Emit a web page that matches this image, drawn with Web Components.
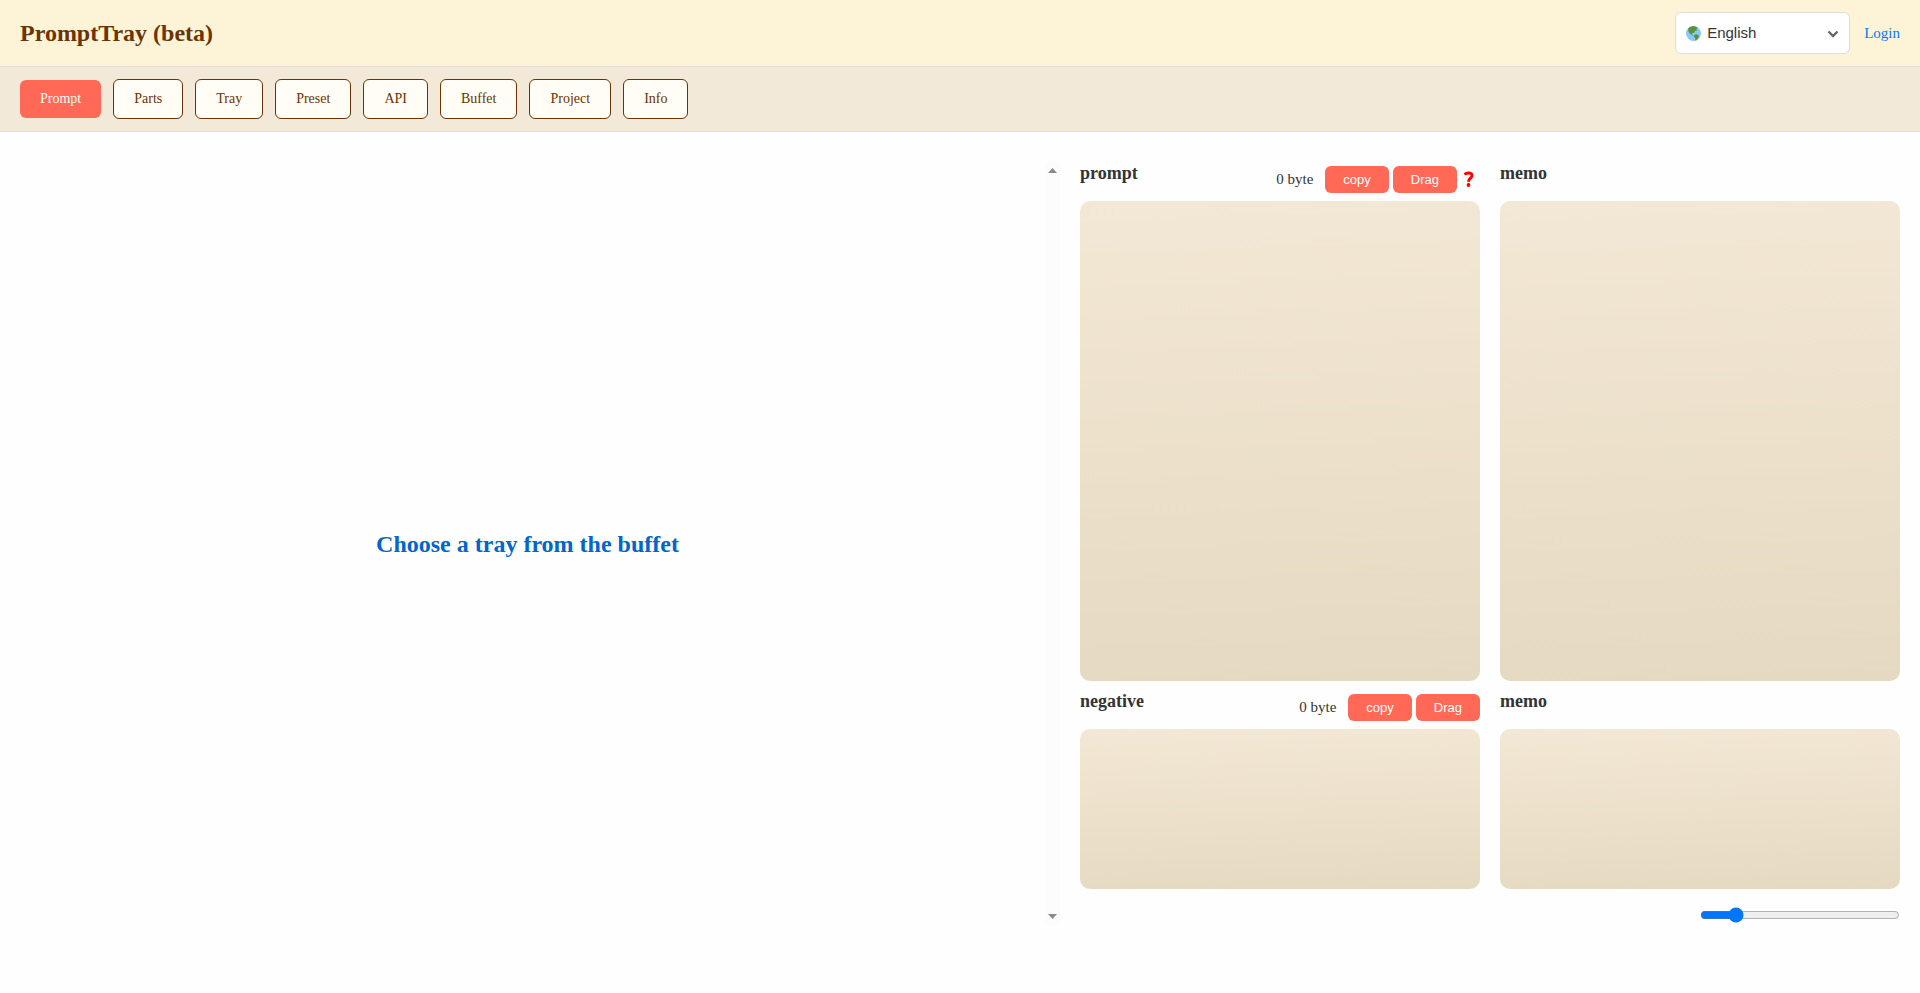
<!DOCTYPE html>
<html lang="en">
<head>
<meta charset="utf-8">
<title>PromptTray (beta)</title>
<style>
  body {
    margin: 0;
    min-height: 100vh;
    background: #fefefe;
    color: #333;
    font: 15px/24px "Liberation Serif", "Times New Roman", serif;
  }
</style>
</head>
<body>
<pt-app></pt-app>

<script>
  const define = (name, html, setup) => {
    const template = document.createElement('template');
    template.innerHTML = html;
    customElements.define(name, class extends HTMLElement {
      constructor() {
        super();
        this.attachShadow({ mode: 'open' }).append(template.content.cloneNode(true));
      }
      connectedCallback() {
        if (setup) setup(this, this.shadowRoot);
      }
    });
  };

  define('pt-language', `
    <style>
      :host { display: block; position: relative; }
      select {
        appearance: none;
        display: block;
        width: 175px;
        height: 42px;
        padding: 0 32px 2px 31px;
        border: 1px solid #ddd;
        border-radius: 6px;
        background: #fff;
        color: #333;
        font: 15px "Liberation Sans", Arial, sans-serif;
      }
      svg { position: absolute; pointer-events: none; }
      .globe { left: 11px; top: 14px; }
      .chevron { right: 11px; top: 16px; }
    </style>
    <select aria-label="Language"><option>English</option></select>
    <svg class="globe" width="15" height="15" viewBox="0 0 36 36"><circle cx="18" cy="18" r="18" fill="#88c9f9"/><path fill="#5c913b" d="M6 5C10 1 17 0 22 1L28 4L25 7L27 10L21 12L20 16L15 17L14 20L19 22L16 23L9 18L5 11ZM20 21L25 20L31 23L30 28L25 34L22 35L22 29L19 25Z"/></svg>
    <svg class="chevron" width="12" height="12" viewBox="0 0 12 12" fill="none" stroke="#666" stroke-width="2.400"><path d="M1.500 3.500L6 8l4.500-4.500"/></svg>
  `);

  define('pt-header', `
    <style>
      :host {
        display: flex; align-items: center; justify-content: space-between;
        padding: 12px 20px;
        border-bottom: 1px solid #ddd;
        background: #fdf3d7;
      }
      h1 { margin: 0; font-size: 24px; line-height: 36px; color: #6b3300; }
      div { display: flex; align-items: center; gap: 14px; }
      a { color: #007bff; text-decoration: none; }
    </style>
    <h1>PromptTray (beta)</h1>
    <div><pt-language></pt-language><a href="#login">Login</a></div>
  `);

  define('pt-tab', `
    <style>
      :host { display: block; }
      button {
        display: block;
        padding: 8px 20px;
        border: 1px solid #6b3300;
        border-radius: 6px;
        background: #fffdf6;
        color: #6b3300;
        font: 14px/22px "Liberation Serif", "Times New Roman", serif;
      }
      :host([active]) button { border: 0; background: #ff6955; color: #fffdf6; }
    </style>
    <button type="button"><slot></slot></button>
  `);

  define('pt-nav', `
    <style>
      :host { display: block; border-bottom: 1px solid #ddd; background: #f3e9d9; }
      nav { display: flex; align-items: center; gap: 12px; padding: 12px 20px; }
    </style>
    <nav><slot></slot></nav>
  `);

  define('pt-action', `
    <style>
      :host { display: block; }
      button {
        display: block;
        padding: 6px 18px;
        border: 0;
        border-radius: 6px;
        background: #ff6955;
        color: #fff;
        font: 13px/15px "Liberation Sans", Arial, sans-serif;
      }
    </style>
    <button type="button"><slot></slot></button>
  `);

  define('pt-field', `
    <style>
      :host { display: flex; flex-direction: column; min-width: 0; }
      header { display: flex; justify-content: space-between; height: 48px; }
      label { padding-top: 8px; font-size: 18px; font-weight: bold; }
      .tools { display: flex; align-items: center; gap: 4px; padding-top: 4px; }
      textarea {
        display: block; box-sizing: border-box; flex: 1;
        width: 100%; padding: 10px;
        border: 0; border-radius: 10px; resize: none;
        background: linear-gradient(178deg, #f3e8d5, #e5d9c1);
        color: #333;
        font: inherit;
      }
    </style>
    <header><label for="text"></label><div class="tools"><slot></slot></div></header>
    <textarea id="text"></textarea>
  `, (host, root) => { root.querySelector('label').textContent = host.getAttribute('label'); });

  define('pt-scrollbar', `
    <style>
      :host {
        display: flex; flex-direction: column; justify-content: space-between; align-items: center;
        box-sizing: border-box; width: 15px; padding: 6px 0; background: #fcfcfc;
      }
      svg { display: block; }
    </style>
    <svg width="9" height="5" viewBox="0 0 9 5" fill="#8b8b8b"><path d="M0 5L4.500 0L9 5Z"/></svg>
    <svg width="9" height="5" viewBox="0 0 9 5" fill="#8b8b8b"><path d="M0 0L4.500 5L9 0Z"/></svg>
  `);

  define('pt-tray', `
    <style>
      :host { display: flex; }
      div { display: flex; flex: 1; padding-left: 10px; overflow: auto; }
      h2 { margin: auto; color: #0066cc; font-size: 24px; line-height: 36px; }
    </style>
    <div><h2>Choose a tray from the buffet</h2></div>
    <pt-scrollbar></pt-scrollbar>
  `);

  define('pt-editor', `
    <style>
      :host { display: block; }
      .fields { display: grid; grid-template-columns: 1fr 1fr; grid-template-rows: 528px 208px; column-gap: 20px; }
      .count { margin-right: 8px; }
      .help { display: flex; padding: 0 5px 0 3px; }
      .size { display: flex; justify-content: flex-end; padding-top: 18px; }
      input { display: block; width: 200px; height: 16px; margin: 0; }
    </style>
    <div class="fields">
      <pt-field label="prompt">
        <span class="count">0 byte</span>
        <pt-action>copy</pt-action><pt-action>Drag</pt-action>
        <a class="help" href="#help" aria-label="Help"><svg width="11" height="16" viewBox="0 0 11 16" fill="none" stroke="#f00" stroke-width="3"><path d="M.6 3.600C2.500 1.200 8 1.200 8 4.600C8 7.400 4.500 7 4.500 10.800"/><circle cx="4.500" cy="14" r="1.900" fill="#f00" stroke="none"/></svg></a>
      </pt-field>
      <pt-field label="memo"></pt-field>
      <pt-field label="negative">
        <span class="count">0 byte</span>
        <pt-action>copy</pt-action><pt-action>Drag</pt-action>
      </pt-field>
      <pt-field label="memo"></pt-field>
    </div>
    <div class="size"><input type="range" min="0" max="100" value="15" aria-label="Tray size"></div>
  `);

  define('pt-app', `
    <style>
      :host { display: block; }
      main { display: grid; grid-template-columns: minmax(0, 1060fr) minmax(0, 820fr); gap: 20px; padding: 21px 20px 40px 0; }
      pt-tray { margin-top: 9px; height: 763px; }
    </style>
    <pt-header></pt-header>
    <pt-nav>
      <pt-tab active>Prompt</pt-tab><pt-tab>Parts</pt-tab><pt-tab>Tray</pt-tab><pt-tab>Preset</pt-tab>
      <pt-tab>API</pt-tab><pt-tab>Buffet</pt-tab><pt-tab>Project</pt-tab><pt-tab>Info</pt-tab>
    </pt-nav>
    <main><pt-tray></pt-tray><pt-editor></pt-editor></main>
  `);
</script>
</body>
</html>
